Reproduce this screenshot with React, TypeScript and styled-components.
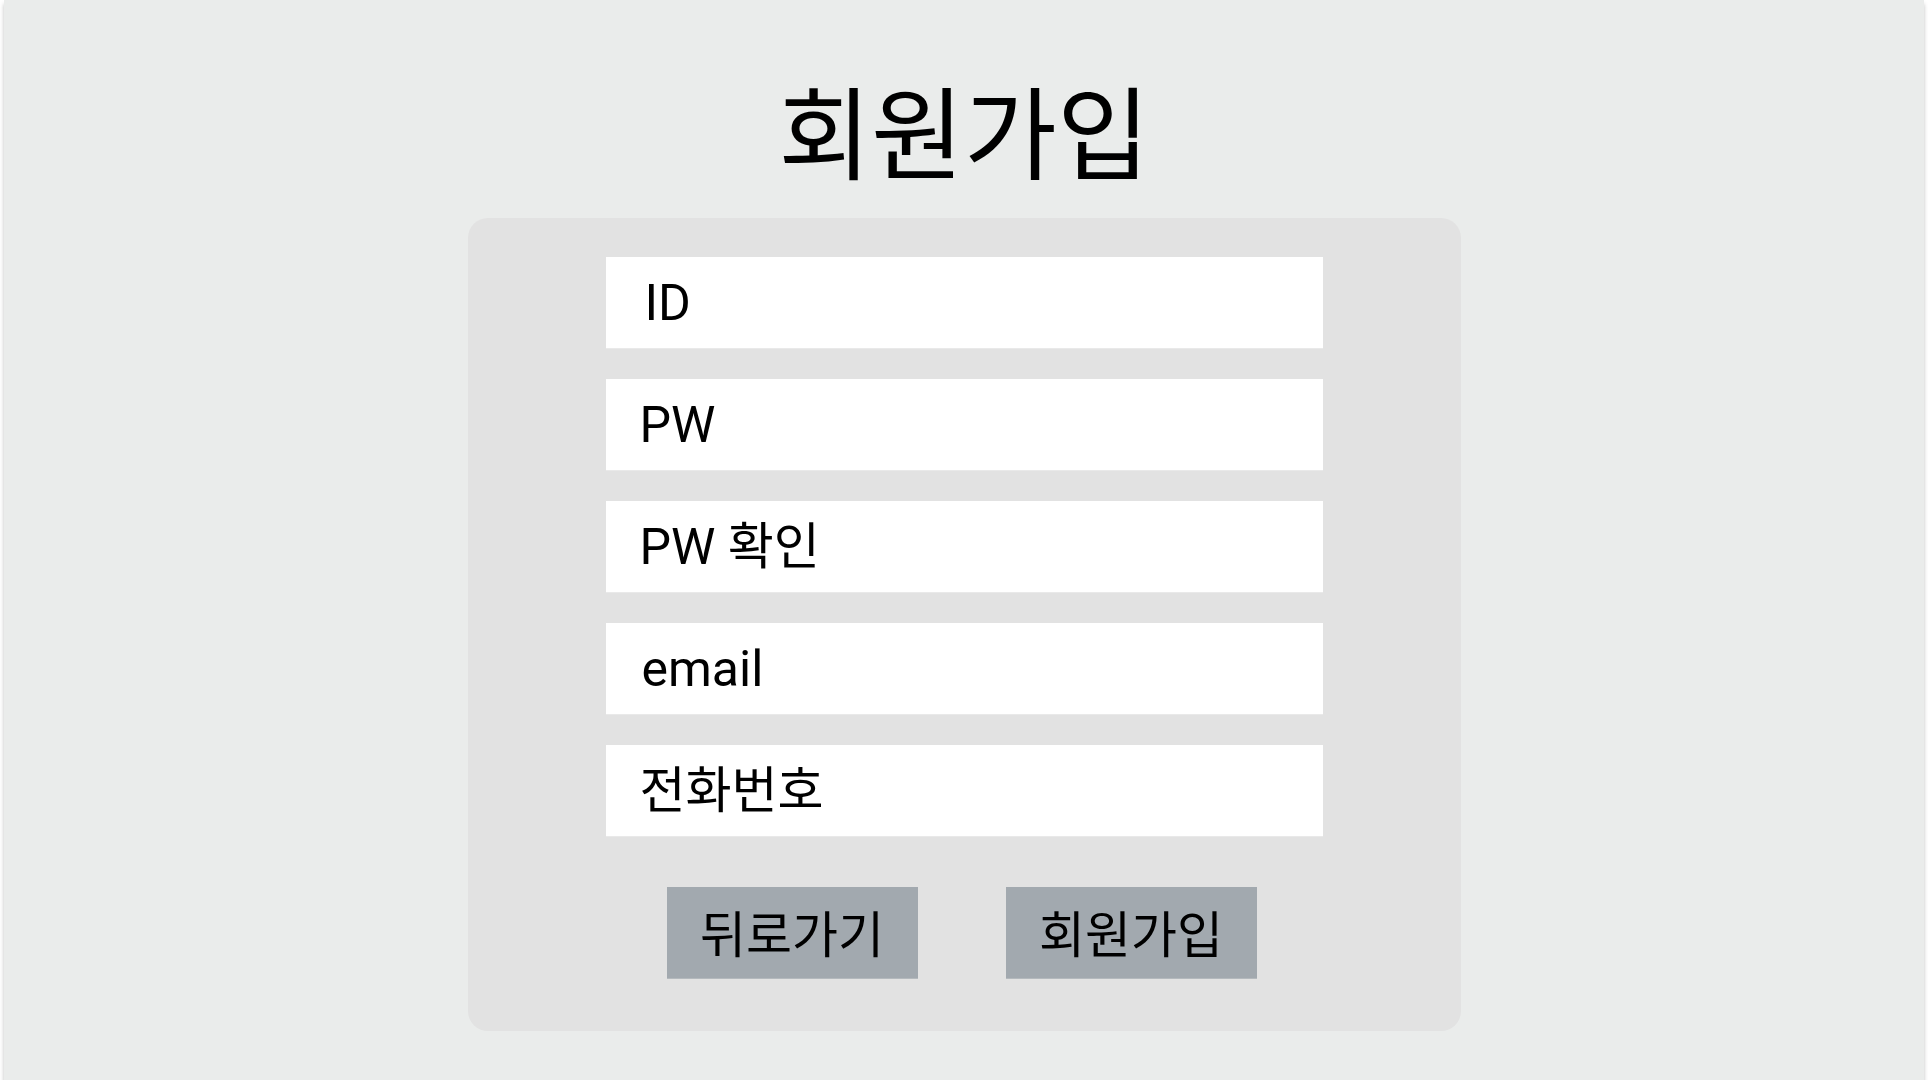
import React from "react";
import styled, { createGlobalStyle } from "styled-components";

const GlobalStyle = createGlobalStyle`
  html, body {
    margin: 0;
    padding: 0;
    background: #ffffff;
  }
  body {
    font-family: Roboto, "Noto Sans CJK KR", sans-serif;
    color: #000000;
  }
  * { box-sizing: border-box; }
`;

const Frame = styled.main`
  width: 1920px;
  height: 1080px;
  margin: 0 auto;
  background: #eaeceb;
  box-shadow: 0 4px 4px rgba(0, 0, 0, 0.25);
  display: flex;
  flex-direction: column;
  align-items: center;
`;

const Title = styled.h1`
  margin: 87px 0 30px;
  font-family: Roboto, "Noto Sans CJK KR", sans-serif;
  font-size: 101px;
  font-weight: 400;
  line-height: 1;
  color: #000000;
`;

const Card = styled.form`
  width: 993px;
  padding: 39px 0 53px;
  background: #e2e2e2;
  border-radius: 20px;
  display: flex;
  flex-direction: column;
  align-items: center;
  gap: 31px;
`;

const Field = styled.input<{ $indent?: number }>`
  width: 717px;
  height: 91px;
  padding: 0 0 0 ${(p) => 34 + (p.$indent ?? 0)}px;
  border: none;
  outline: none;
  background: #ffffff;
  box-shadow: 0 1px 0 #e9e9e9;
  font-family: Roboto, "Noto Sans CJK KR", sans-serif;
  font-size: 50px;
  color: #000000;

  &::placeholder {
    color: #000000;
    opacity: 1;
  }
`;

const ButtonRow = styled.div`
  margin: 20px 5px 0 0;
  display: flex;
  gap: 88px;
`;

const ActionButton = styled.button`
  width: 251px;
  height: 91px;
  border: none;
  padding: 0 0 4px;
  background: #a2a9af;
  box-shadow: 0 1px 0 #b4b9bd;
  font-family: Roboto, "Noto Sans CJK KR", sans-serif;
  font-size: 50px;
  color: #000000;
  cursor: pointer;
`;

const fields = [
  { name: "id", placeholder: "ID", type: "text", indent: 5 },
  { name: "pw", placeholder: "PW", type: "password", indent: 0 },
  { name: "pwConfirm", placeholder: "PW 확인", type: "password", indent: 0 },
  { name: "email", placeholder: "email", type: "email", indent: 2 },
  { name: "phone", placeholder: "전화번호", type: "tel", indent: 0 },
];

export default function App() {
  return (
    <>
      <GlobalStyle />
      <Frame>
        <Title>회원가입</Title>
        <Card onSubmit={(e) => e.preventDefault()}>
          {fields.map((f) => (
            <Field
              key={f.name}
              name={f.name}
              type={f.type}
              placeholder={f.placeholder}
              $indent={f.indent}
            />
          ))}
          <ButtonRow>
            <ActionButton type="button">뒤로가기</ActionButton>
            <ActionButton type="submit">회원가입</ActionButton>
          </ButtonRow>
        </Card>
      </Frame>
    </>
  );
}
